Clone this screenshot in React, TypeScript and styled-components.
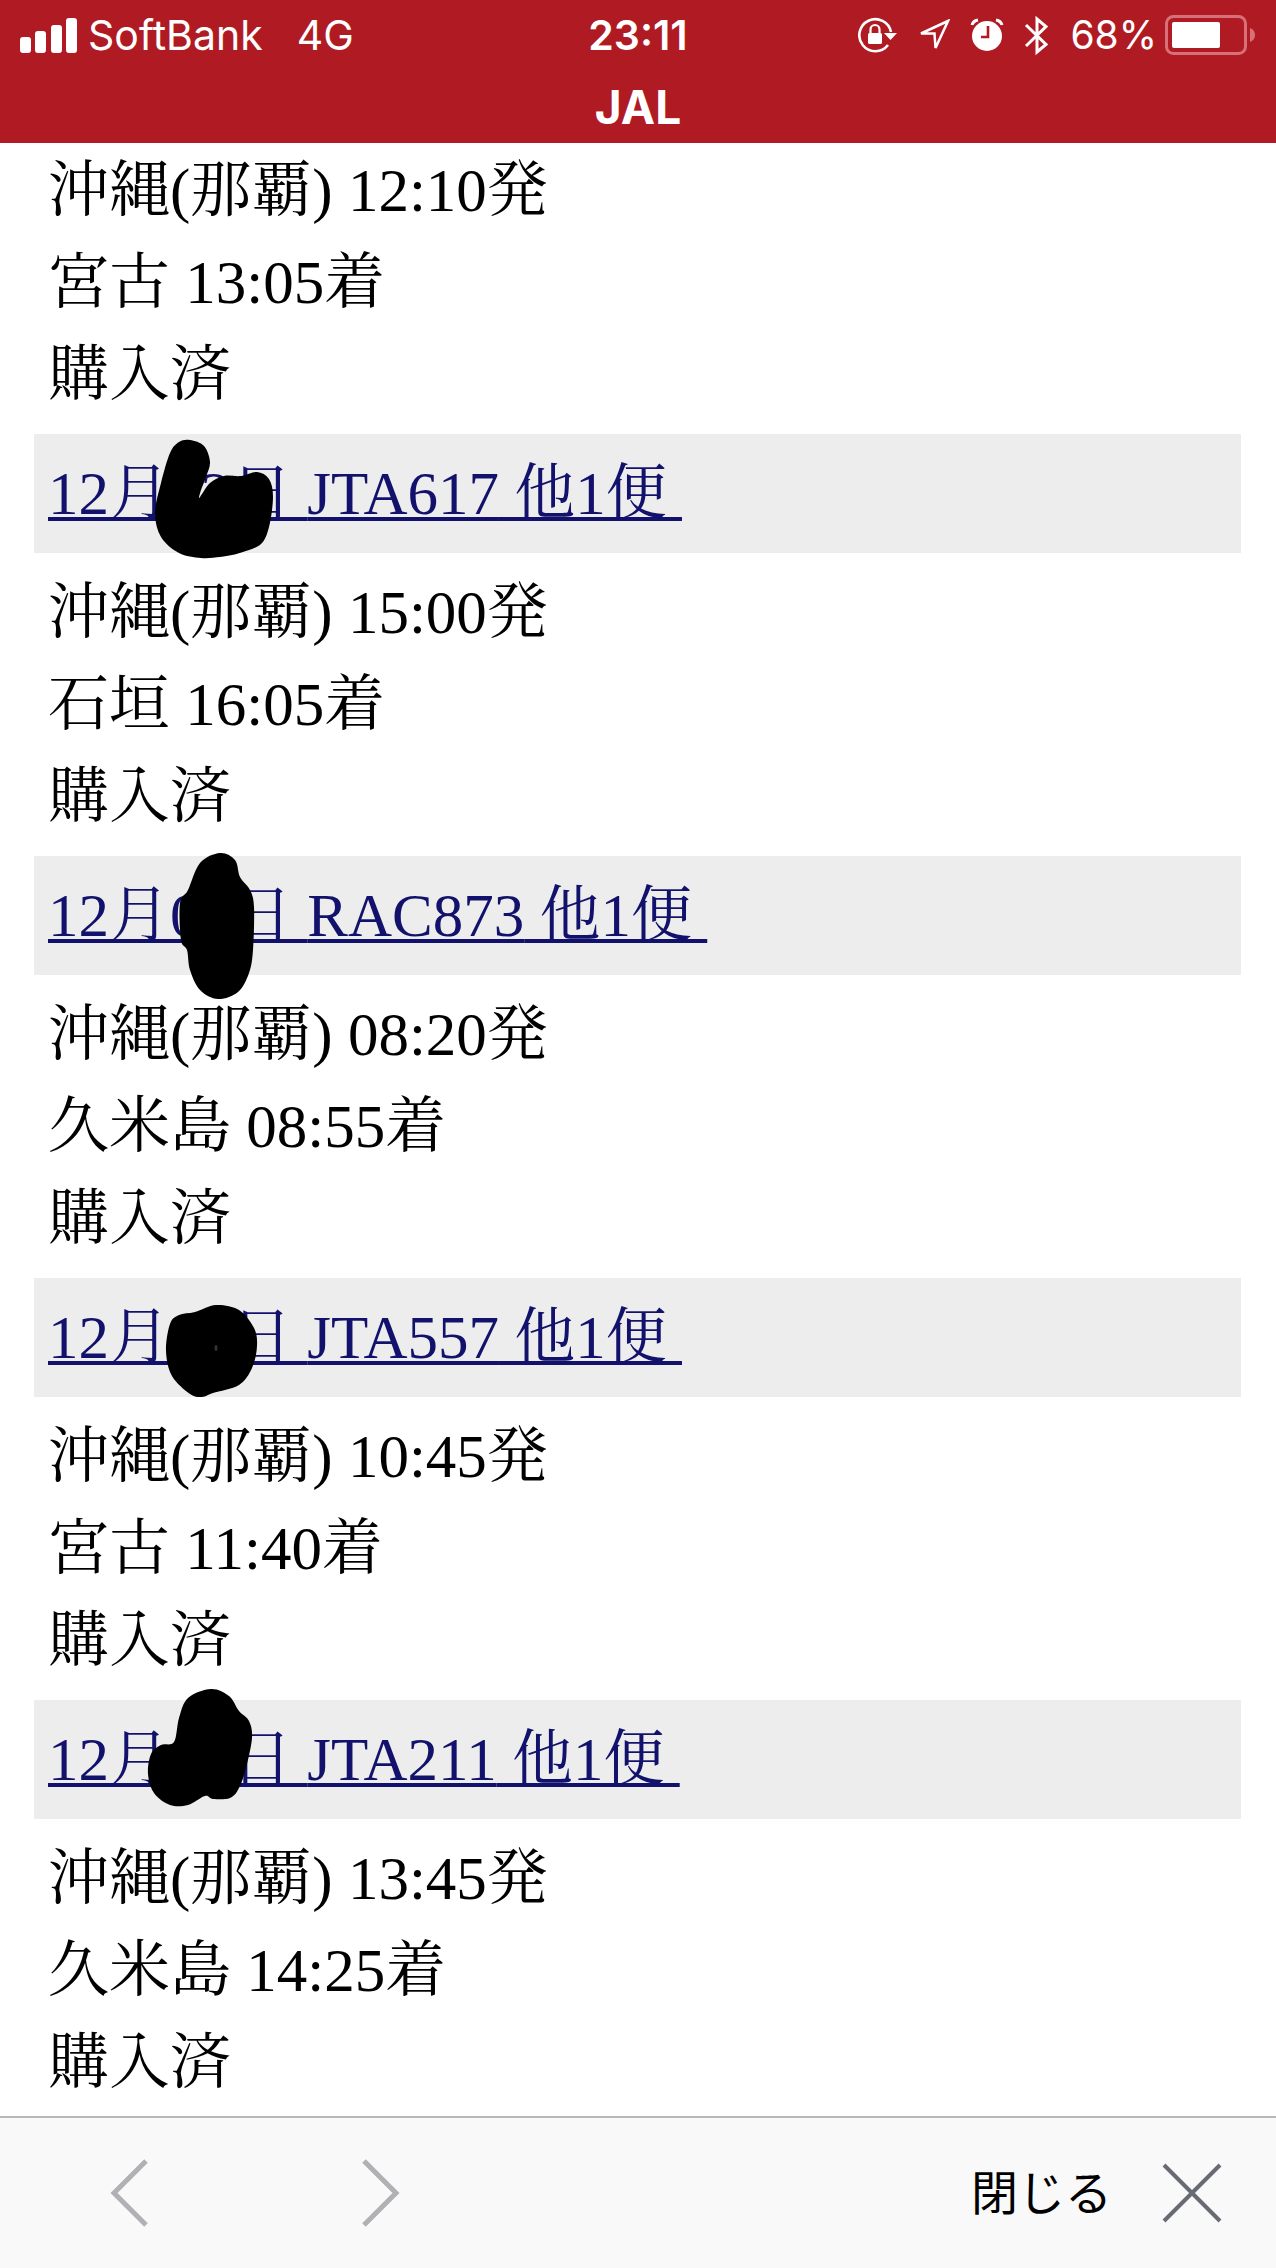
import React from "react";
import styled, { createGlobalStyle } from "styled-components";

const GlobalStyle = createGlobalStyle`
  * { box-sizing: border-box; }
  body { margin: 0; background: #fff; }
`;

const sans = `Inter, "Noto Sans CJK JP", sans-serif`;
const mincho = `"Liberation Serif", "Noto Serif CJK JP", "Noto Sans CJK JP", serif`;

const Screen = styled.div`
  display: flex;
  flex-direction: column;
  min-height: 100vh;
  color: #000;
`;

const Header = styled.header`
  background: #b01b23;
  color: #fff;
  font-family: ${sans};
  padding-bottom: 8px;
`;

const StatusBar = styled.div`
  display: grid;
  grid-template-columns: 1fr auto 1fr;
  align-items: center;
  height: 70px;
  padding: 0 20px;
  font-size: 41px;
  line-height: 48px;
  white-space: nowrap;
`;

const StatusGroup = styled.div<{ $end?: boolean; $gap: number }>`
  display: flex;
  align-items: center;
  justify-content: ${(p) => (p.$end ? "flex-end" : "flex-start")};
  gap: ${(p) => p.$gap}px;
`;

const Network = styled.span`
  margin-left: 24px;
`;

const Clock = styled.time`
  font-weight: 600;
`;

const PowerGroup = styled.div`
  display: flex;
  align-items: center;
  gap: 8px;
  font-size: 39px;
`;

const Title = styled.h1`
  margin: 9px 0 0;
  font-size: 46px;
  line-height: 56px;
  font-weight: 700;
  text-align: center;
`;

const Main = styled.main`
  flex: 1;
  padding: 2px 35px 0 34px;
  font-family: ${mincho};
  font-size: 61px;
  line-height: 92px;
`;

const FlightBar = styled.h2`
  position: relative;
  margin: 0;
  padding: 14px 14px 13px;
  background: #ededed;
  font-size: inherit;
  font-weight: 400;
`;

const FlightLink = styled.a`
  color: #12126c;
  text-decoration: underline;
  text-decoration-thickness: 4px;
  text-underline-offset: 3px;
  text-decoration-skip-ink: none;
`;

const Blank = styled.span<{ $digits: number }>`
  display: inline-block;
  width: ${(p) => p.$digits / 2}em;
`;

const Scribble = styled.svg`
  position: absolute;
  left: 0;
  top: 0;
  width: 260px;
  height: 119px;
  overflow: visible;
  pointer-events: none;
`;

const Details = styled.div<{ $first?: boolean }>`
  padding: ${(p) => (p.$first ? "0 14px 13px" : "14px 14px 13px")};
  &:last-child { padding-bottom: 0; }
`;

const Line = styled.p`
  margin: 0;
`;

const Toolbar = styled.footer`
  display: flex;
  align-items: center;
  justify-content: space-between;
  height: 152px;
  padding: 0 54px 0 107px;
  border-top: 2px solid #b8b8ba;
  background: #f9f9f9;
  font-family: ${sans};
`;

const NavButtons = styled.nav`
  display: flex;
  gap: 204px;
`;

const ToolButton = styled.button`
  display: flex;
  align-items: center;
  gap: 50px;
  padding: 0;
  border: 0;
  background: none;
  color: #000;
  font-family: inherit;
  font-size: 47px;
  line-height: 60px;
`;

type Point = [number, number];

/* Closed smooth curve through the given points. */
function smooth(pts: Point[]) {
  const n = pts.length;
  let d = `M${pts[0][0]} ${pts[0][1]}`;
  for (let i = 0; i < n; i++) {
    const a = pts[(i + n - 1) % n];
    const b = pts[i];
    const c = pts[(i + 1) % n];
    const e = pts[(i + 2) % n];
    d += `C${b[0] + (c[0] - a[0]) / 6} ${b[1] + (c[1] - a[1]) / 6} ${c[0] - (e[0] - b[0]) / 6} ${c[1] - (e[1] - b[1]) / 6} ${c[0]} ${c[1]}`;
  }
  return d + "Z";
}

type Flight = {
  flight?: string;
  before?: string;
  blank?: number;
  after?: string;
  ink?: Point[];
  dot?: Point;
  from: string;
  to: string;
};

const flights: Flight[] = [
  { from: "沖縄(那覇) 12:10発", to: "宮古 13:05着" },
  {
    flight: "JTA617", before: "", blank: 1, after: "2",
    ink: [[156, 6], [170, 12], [176, 28], [172, 43], [167, 56], [165, 64], [168, 60], [176, 49], [190, 42], [207, 42], [223, 38], [235, 45], [239, 63], [235, 93], [227, 110], [209, 118], [198, 121], [186, 123], [167, 124], [145, 119], [127, 103], [121, 79], [127, 49], [136, 19], [145, 8]],
    from: "沖縄(那覇) 15:00発", to: "石垣 16:05着",
  },
  {
    flight: "RAC873", before: "0", blank: 1, after: "",
    ink: [[186, -3], [201, 4], [206, 21], [216, 34], [220, 51], [219, 94], [215, 117], [204, 136], [184, 143], [166, 134], [156, 114], [153, 94], [147, 84], [146, 47], [154, 34], [166, 7]],
    from: "沖縄(那覇) 08:20発", to: "久米島 08:55着",
  },
  {
    flight: "JTA557", before: "", blank: 2, after: "",
    ink: [[182, 27], [205, 32], [220, 50], [223, 68], [218, 90], [205, 107], [179, 115], [168, 119], [156, 116], [138, 98], [132, 73], [136, 46], [145, 37], [161, 34]],
    dot: [182, 70],
    from: "沖縄(那覇) 10:45発", to: "宮古 11:40着",
  },
  {
    flight: "JTA211", before: "", blank: 2, after: "",
    ink: [[177, -11], [195, -4], [205, 11], [215, 21], [218, 38], [212, 68], [205, 88], [196, 98], [179, 99], [171, 96], [154, 105], [136, 105], [120, 93], [114, 74], [117, 54], [127, 45], [140, 42], [145, 18], [154, -2]],
    from: "沖縄(那覇) 13:45発", to: "久米島 14:25着",
  },
];

const Signal = () => (
  <svg width="58" height="35" viewBox="0 0 58 35" fill="#fff" aria-hidden="true">
    <rect x="0" y="19" width="11" height="16" rx="3" />
    <rect x="15" y="13" width="11" height="22" rx="3" />
    <rect x="31" y="7" width="11" height="28" rx="3" />
    <rect x="46" y="0" width="11" height="35" rx="3" />
  </svg>
);

const RotationLock = () => (
  <svg width="39" height="36" viewBox="0 0 39 36" aria-hidden="true">
    <path d="M33 15A16 16 0 1 0 30 28" fill="none" stroke="#fff" strokeWidth="2.6" />
    <path d="M26 16H39L32.500 23Z" fill="#fff" />
    <rect x="10" y="16" width="14" height="11" rx="1.500" fill="#fff" />
    <path d="M12.500 17V12.500a4.500 4.500 0 0 1 9 0V17" fill="none" stroke="#fff" strokeWidth="2.200" />
  </svg>
);

const LocationArrow = () => (
  <svg width="33" height="35" viewBox="0 0 33 35" aria-hidden="true">
    <path d="M31 3L4 15.500H17.500L18.500 30Z" fill="none" stroke="#fff" strokeWidth="2.500" />
  </svg>
);

const Alarm = () => (
  <svg width="34" height="34" viewBox="0 0 34 34" aria-hidden="true">
    <circle cx="17" cy="18" r="15" fill="#fff" />
    <path d="M2 7Q3 3 8 2M32 7Q31 3 26 2" fill="none" stroke="#fff" strokeWidth="3" />
    <path d="M18 8V19H11" fill="none" stroke="#b01b23" strokeWidth="2.600" />
  </svg>
);

const Bluetooth = () => (
  <svg width="26" height="41" viewBox="0 0 26 41" aria-hidden="true">
    <path d="M2 10L22 29.500L13 37V4L22 11.500L2 31" fill="none" stroke="#fff" strokeWidth="3" />
  </svg>
);

const Battery = () => (
  <svg width="91" height="40" viewBox="0 0 91 40" aria-hidden="true">
    <rect x="1.500" y="1.500" width="79" height="37" rx="7" fill="none" stroke="#d77078" strokeWidth="3" />
    <path d="M85 13Q90 15 90 20T85 27Z" fill="#d77078" />
    <rect x="7" y="7" width="48" height="26" rx="2" fill="#fff" />
  </svg>
);

export default function App() {
  return (
    <Screen lang="ja">
      <GlobalStyle />
      <Header>
        <StatusBar>
          <StatusGroup $gap={10}>
            <Signal />
            <span>SoftBank</span>
            <Network>4G</Network>
          </StatusGroup>
          <Clock>23:11</Clock>
          <StatusGroup $end $gap={20}>
            <RotationLock />
            <LocationArrow />
            <Alarm />
            <Bluetooth />
            <PowerGroup>
              <span>68%</span>
              <Battery />
            </PowerGroup>
          </StatusGroup>
        </StatusBar>
        <Title>JAL</Title>
      </Header>
      <Main>
        {flights.map((f, i) => (
          <React.Fragment key={i}>
            {f.flight && (
              <FlightBar>
                <FlightLink href="#">
                  12月{f.before}
                  <Blank $digits={f.blank ?? 0} />
                  {f.after}日 {f.flight} 他1便&nbsp;
                </FlightLink>
                <Scribble viewBox="0 0 260 119" aria-hidden="true">
                  <path d={smooth(f.ink ?? [])} fill="#000" />
                  {f.dot && <ellipse cx={f.dot[0]} cy={f.dot[1]} rx="1.500" ry="3" fill="#333" />}
                </Scribble>
              </FlightBar>
            )}
            <Details $first={!f.flight}>
              <Line>{f.from}</Line>
              <Line>{f.to}</Line>
              <Line>購入済</Line>
            </Details>
          </React.Fragment>
        ))}
      </Main>
      <Toolbar>
        <NavButtons>
          <ToolButton type="button" aria-label="戻る">
            <svg width="46" height="72" viewBox="0 0 46 72" fill="none" stroke="#b0b0b5" strokeWidth="5" aria-hidden="true">
              <path d="M39 4L7 36L39 68" />
            </svg>
          </ToolButton>
          <ToolButton type="button" aria-label="進む">
            <svg width="46" height="72" viewBox="0 0 46 72" fill="none" stroke="#b0b0b5" strokeWidth="5" aria-hidden="true">
              <path d="M7 4L39 36L7 68" />
            </svg>
          </ToolButton>
        </NavButtons>
        <ToolButton type="button">
          閉じる
          <svg width="60" height="60" viewBox="0 0 60 60" fill="none" stroke="#696b74" strokeWidth="4" aria-hidden="true">
            <path d="M2 2L58 58M58 2L2 58" />
          </svg>
        </ToolButton>
      </Toolbar>
    </Screen>
  );
}
